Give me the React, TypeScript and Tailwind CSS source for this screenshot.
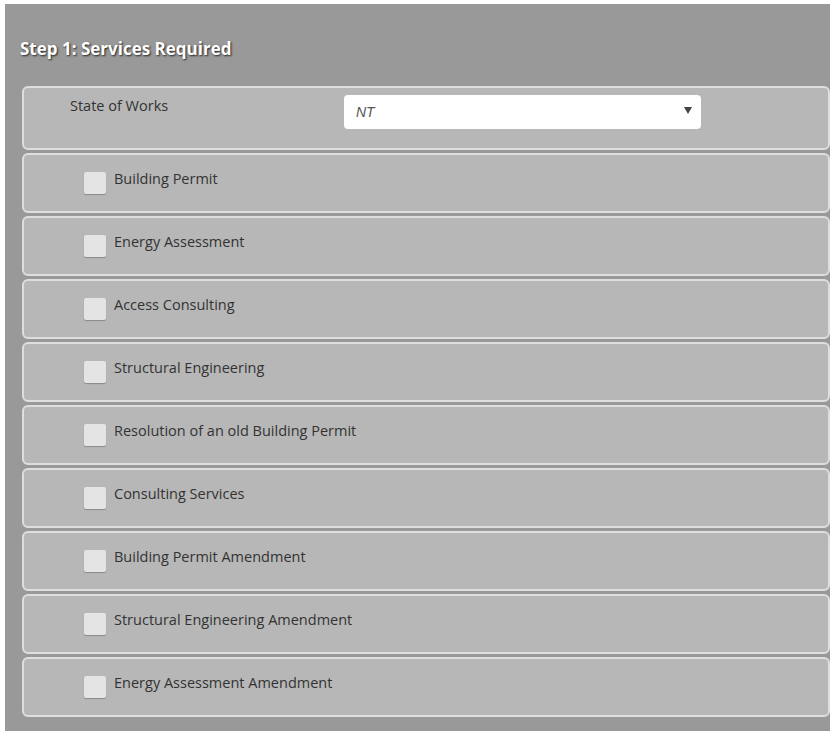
import React, { useState } from 'react';

const services = [
  'Building Permit',
  'Energy Assessment',
  'Access Consulting',
  'Structural Engineering',
  'Resolution of an old Building Permit',
  'Consulting Services',
  'Building Permit Amendment',
  'Structural Engineering Amendment',
  'Energy Assessment Amendment',
];

const states = ['ACT', 'NSW', 'NT', 'QLD', 'SA', 'TAS', 'VIC', 'WA'];

export default function App() {
  const [state, setState] = useState('NT');
  const [checked, setChecked] = useState<Record<string, boolean>>({});

  return (
    <div className="min-h-[731px] bg-white pl-[5px] pt-[4px] font-['Open_Sans',sans-serif] text-[14.5px] text-[#333]">
      <div className="min-h-[727px] bg-[#999999] pl-[17px] pt-[33px] pb-[13px]">
        <h2 className="-ml-[2px] mb-[25px] text-[17px] font-bold leading-[24px] text-white [text-shadow:1px_1px_2px_#222]">
          Step 1: Services Required
        </h2>

        <div className="flex flex-col gap-[3px]">
          {/* state selector row */}
          <div className="flex h-[64px] rounded-[6px] border-2 border-[#dedede] bg-[#b7b7b7]">
            <label className="w-[320px] pl-[46px] pt-[8px] leading-[20px]">State of Works</label>
            <div className="relative mt-[7px] h-[34px] w-[357px]">
              <select
                value={state}
                onChange={(e) => setState(e.target.value)}
                className="h-full w-full appearance-none rounded-[4px] bg-white pl-[12px] text-[14px] italic text-[#555] outline-none font-['Liberation_Sans',sans-serif]"
              >
                {states.map((s) => (
                  <option key={s} value={s}>
                    {s}
                  </option>
                ))}
              </select>
              <span className="pointer-events-none absolute right-[9px] top-[12px] h-0 w-0 border-x-[4px] border-t-[7px] border-x-transparent border-t-[#444]" />
            </div>
          </div>

          {services.map((name) => (
            <label
              key={name}
              className="flex h-[60px] cursor-pointer items-start rounded-[6px] border-2 border-[#dedede] bg-[#b7b7b7] pl-[60px] pt-[14px]"
            >
              <input
                type="checkbox"
                className="peer sr-only"
                checked={!!checked[name]}
                onChange={() => setChecked({ ...checked, [name]: !checked[name] })}
              />
              <span className="mt-[3px] flex h-[22px] w-[22px] shrink-0 items-center justify-center rounded-[2px] bg-[#e4e4e4] shadow-[0_1px_1px_rgba(0,0,0,0.25)]">
                {checked[name] && (
                  <svg viewBox="0 0 16 16" className="h-[13px] w-[13px]" fill="none" stroke="#444" strokeWidth="2.5">
                    <path d="M3 8.5l3 3 7-7" />
                  </svg>
                )}
              </span>
              <span className="ml-[8px] leading-[20px]">{name}</span>
            </label>
          ))}
        </div>
      </div>
    </div>
  );
}
